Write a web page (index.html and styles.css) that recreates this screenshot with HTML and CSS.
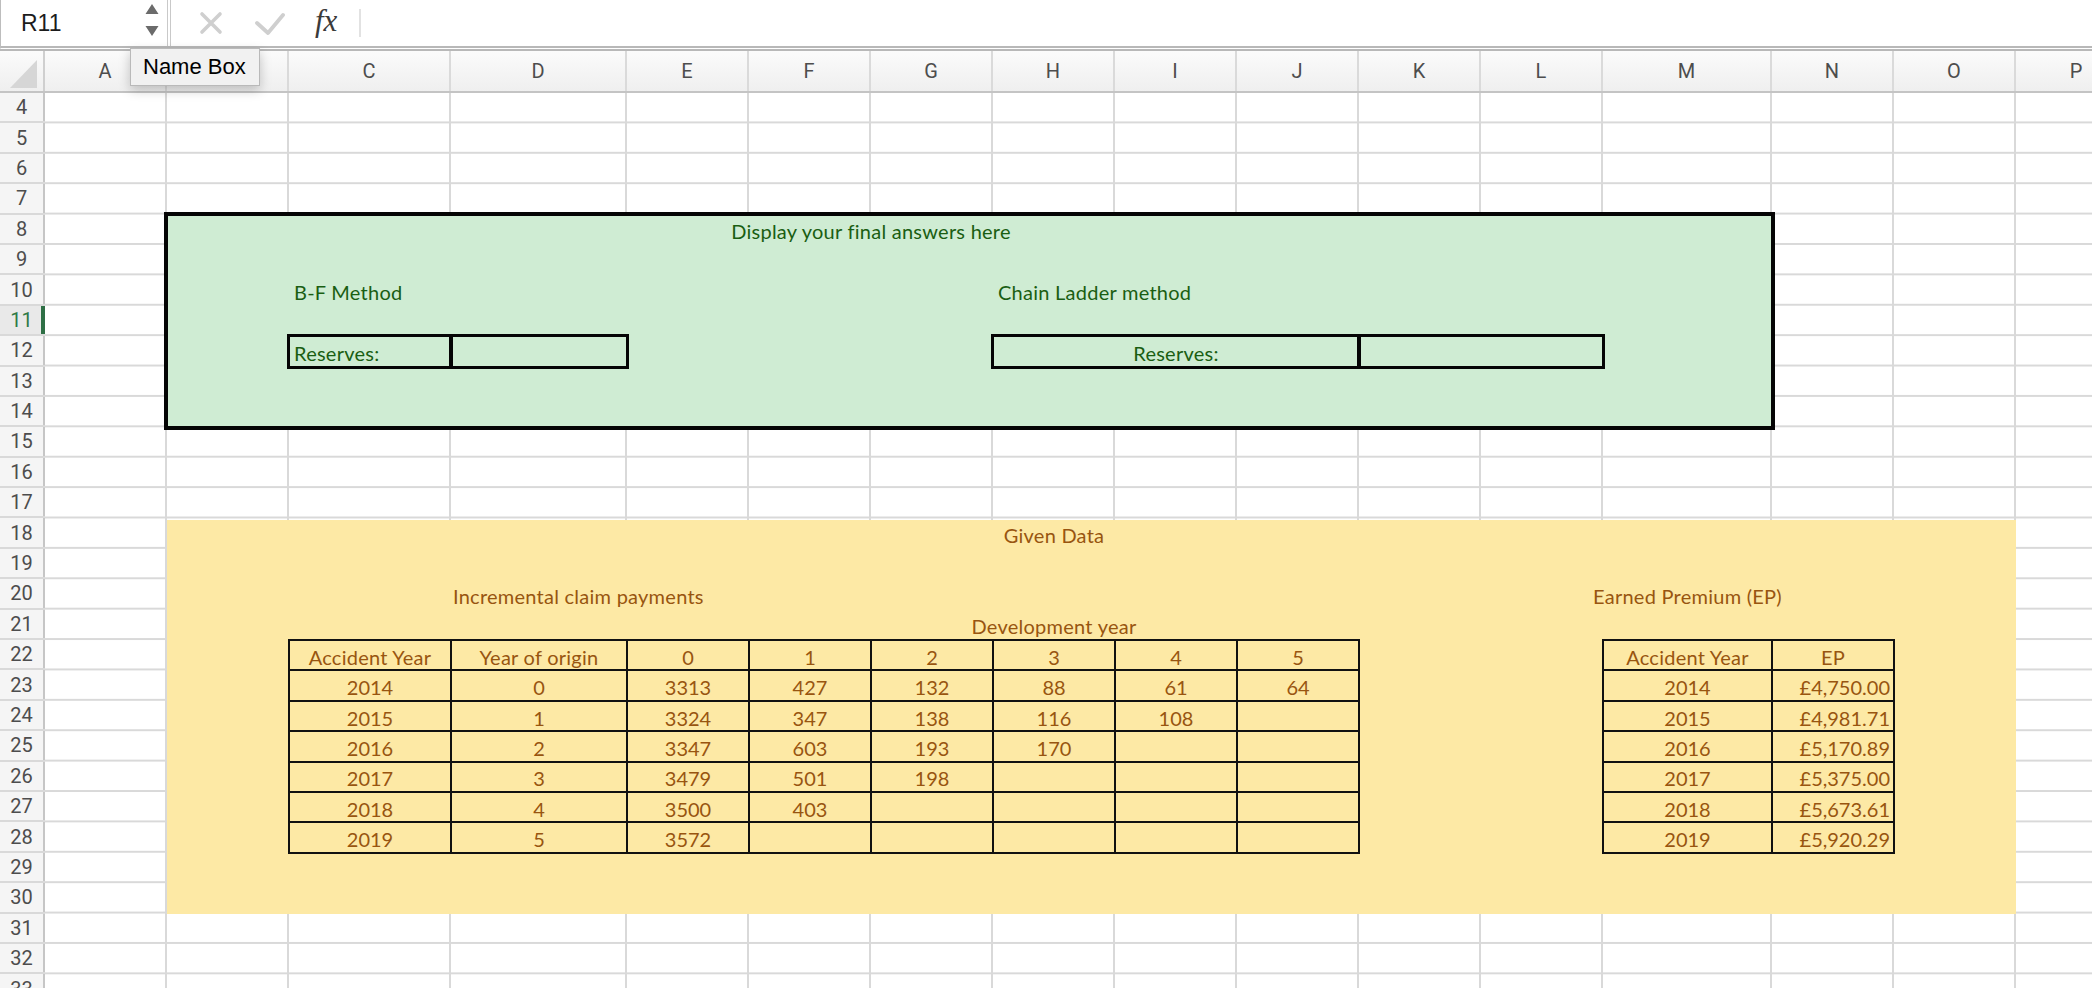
FILE: index.html
```html
<!DOCTYPE html>
<html lang="en">
<head>
<meta charset="utf-8">
<title>Claims reserving sheet</title>
<link rel="stylesheet" href="styles.css">
</head>
<body>
<div class="topbar">
  <div class="namebox">
    <span class="ref">R11</span>
    <svg class="spin" width="14" height="34" viewBox="0 0 14 34"><path d="M0.5 11 L7 1 L13.5 11 Z M0.5 23 L13.5 23 L7 33 Z" fill="#6b6b6b"/></svg>
  </div>
  <div class="fbar">
    <svg class="ico-x" width="24" height="24" viewBox="0 0 24 24"><path d="M3 3 L21 21 M21 3 L3 21" stroke="#cfcfcf" stroke-width="3.6" stroke-linecap="round" fill="none"/></svg>
    <svg class="ico-ok" width="30" height="24" viewBox="0 0 30 24"><path d="M2 11 L13 21 L28 3" stroke="#cfcfcf" stroke-width="3.8" stroke-linecap="round" stroke-linejoin="round" fill="none"/></svg>
    <span class="fx">fx</span>
    <span class="fdiv"></span>
    <div class="finput"></div>
  </div>
</div>

<div class="sheet">
  <div class="hdr">
    <div class="corner w0"><svg width="30" height="30" viewBox="0 0 30 30"><path d="M28 1 L28 29 L1 29 Z" fill="#d6d6d6"/></svg></div>
    <div class="ch wn">A</div>
    <div class="ch wn">B</div>
    <div class="ch wc">C</div>
    <div class="ch wd">D</div>
    <div class="ch wn">E</div>
    <div class="ch wn">F</div>
    <div class="ch wn">G</div>
    <div class="ch wn">H</div>
    <div class="ch wn">I</div>
    <div class="ch wn">J</div>
    <div class="ch wn">K</div>
    <div class="ch wn">L</div>
    <div class="ch wm">M</div>
    <div class="ch wn">N</div>
    <div class="ch wn">O</div>
    <div class="ch wn">P</div>
  </div>

  <div class="bg">
    <div class="rhcol">
      <div class="rh">4</div><div class="rh">5</div><div class="rh">6</div><div class="rh">7</div>
      <div class="rh">8</div><div class="rh">9</div><div class="rh">10</div><div class="rh sel">11</div>
      <div class="rh">12</div><div class="rh">13</div><div class="rh">14</div><div class="rh">15</div>
      <div class="rh">16</div><div class="rh">17</div><div class="rh">18</div><div class="rh">19</div>
      <div class="rh">20</div><div class="rh">21</div><div class="rh">22</div><div class="rh">23</div>
      <div class="rh">24</div><div class="rh">25</div><div class="rh">26</div><div class="rh">27</div>
      <div class="rh">28</div><div class="rh">29</div><div class="rh">30</div><div class="rh">31</div>
      <div class="rh">32</div><div class="rh">33</div>
    </div>
    <div class="stripe wn"></div>
    <div class="stripe wn"></div>
    <div class="stripe wc"></div>
    <div class="stripe wd"></div>
    <div class="stripe wn"></div>
    <div class="stripe wn"></div>
    <div class="stripe wn"></div>
    <div class="stripe wn"></div>
    <div class="stripe wn"></div>
    <div class="stripe wn"></div>
    <div class="stripe wn"></div>
    <div class="stripe wn"></div>
    <div class="stripe wm"></div>
    <div class="stripe wn"></div>
    <div class="stripe wn"></div>
    <div class="stripe wn"></div>
  </div>

  <div class="green">
    <div class="txt ctr g-title">Display your final answers here</div>
    <div class="txt lft g-bf">B-F Method</div>
    <div class="txt lft g-cl">Chain Ladder method</div>
    <div class="res res-bf">
      <div class="rcell txt lft">Reserves:</div>
      <div class="rcell"></div>
    </div>
    <div class="res res-cl">
      <div class="rcell txt ctr">Reserves:</div>
      <div class="rcell"></div>
    </div>
  </div>

  <div class="yellow">
    <div class="txt ctr y-given">Given Data</div>
    <div class="txt lft y-inc">Incremental claim payments</div>
    <div class="txt ctr y-ep">Earned Premium (EP)</div>
    <div class="txt ctr y-dev">Development year</div>

    <div class="claims">
      <div class="cell lbl">Accident Year</div><div class="cell lbl">Year of origin</div><div class="cell">0</div><div class="cell">1</div><div class="cell">2</div><div class="cell">3</div><div class="cell">4</div><div class="cell">5</div>
      <div class="cell">2014</div><div class="cell">0</div><div class="cell">3313</div><div class="cell">427</div><div class="cell">132</div><div class="cell">88</div><div class="cell">61</div><div class="cell">64</div>
      <div class="cell">2015</div><div class="cell">1</div><div class="cell">3324</div><div class="cell">347</div><div class="cell">138</div><div class="cell">116</div><div class="cell">108</div><div class="cell"></div>
      <div class="cell">2016</div><div class="cell">2</div><div class="cell">3347</div><div class="cell">603</div><div class="cell">193</div><div class="cell">170</div><div class="cell"></div><div class="cell"></div>
      <div class="cell">2017</div><div class="cell">3</div><div class="cell">3479</div><div class="cell">501</div><div class="cell">198</div><div class="cell"></div><div class="cell"></div><div class="cell"></div>
      <div class="cell">2018</div><div class="cell">4</div><div class="cell">3500</div><div class="cell">403</div><div class="cell"></div><div class="cell"></div><div class="cell"></div><div class="cell"></div>
      <div class="cell">2019</div><div class="cell">5</div><div class="cell">3572</div><div class="cell"></div><div class="cell"></div><div class="cell"></div><div class="cell"></div><div class="cell"></div>
    </div>

    <div class="eptbl">
      <div class="cell lbl">Accident Year</div><div class="cell lbl">EP</div>
      <div class="cell">2014</div><div class="cell num">£4,750.00</div>
      <div class="cell">2015</div><div class="cell num">£4,981.71</div>
      <div class="cell">2016</div><div class="cell num">£5,170.89</div>
      <div class="cell">2017</div><div class="cell num">£5,375.00</div>
      <div class="cell">2018</div><div class="cell num">£5,673.61</div>
      <div class="cell">2019</div><div class="cell num">£5,920.29</div>
    </div>
  </div>
</div>

<div class="tooltip">Name Box</div>
</body>
</html>
```

FILE: styles.css
```css
* { box-sizing: border-box; }
html, body { margin: 0; padding: 0; }
body {
  width: 2092px;
  height: 988px;
  overflow: hidden;
  position: relative;
  background: #ffffff;
  font-family: "Liberation Sans", Arial, sans-serif;
}

/* ---------- formula bar ---------- */
.topbar {
  height: 51px;
  display: flex;
  background: #ffffff;
  border-left: 1px solid #bdbdbd;
  border-bottom: 5px double #b8b8b8;
}
.namebox {
  flex: none;
  width: 170px;
  display: flex;
  align-items: center;
  justify-content: space-between;
  padding: 0 8px 0 20px;
  border-right: 4px double #c9c9c9;
}
.ref { font-size: 23px; color: #1c1c1c; }
.spin { margin-bottom: 6px; }
.fbar { flex: 1; display: flex; align-items: center; }
.ico-x { margin-left: 28px; flex: none; }
.ico-ok { margin-left: 32px; flex: none; margin-top: 2px; }
.fx {
  margin-left: 30px;
  font-family: "Liberation Serif", "Times New Roman", serif;
  font-style: italic;
  font-size: 31px;
  color: #3a3a3a;
  margin-top: -4px;
}
.fdiv { width: 2px; height: 28px; background: #e2e2e2; margin-left: 22px; }
.finput { flex: 1; }

/* ---------- sheet grid ---------- */
.sheet {
  display: grid;
  grid-template-columns: 45px 122px 122px 162px 176px repeat(8, 122px) 169px 122px 122px 122px;
  grid-template-rows: 42px repeat(30, 30.4px);
}
.w0 { width: 45px; }
.wn { width: 122px; }
.wc { width: 162px; }
.wd { width: 176px; }
.wm { width: 169px; }

.hdr {
  grid-column: 1 / -1;
  grid-row: 1;
  display: flex;
  background: linear-gradient(#fbfbfb, #efefef);
  border-bottom: 2px solid #c4c4c4;
}
.corner {
  flex: none;
  display: flex;
  align-items: flex-end;
  justify-content: flex-end;
  padding: 0 4px 2px 0;
  border-right: 2px solid #cfcfcf;
}
.ch {
  flex: none;
  display: flex;
  align-items: center;
  justify-content: center;
  font-family: Roboto, "Liberation Sans", sans-serif;
  font-size: 20px;
  color: #4d4d4d;
  border-right: 2px solid #dadada;
}

.bg {
  grid-column: 1 / -1;
  grid-row: 2 / -1;
  display: flex;
}
.rhcol {
  flex: none;
  width: 45px;
  display: flex;
  flex-direction: column;
  background: #f5f5f5;
}
.rh {
  flex: none;
  height: 30.4px;
  display: flex;
  align-items: center;
  justify-content: center;
  padding-right: 2px;
  font-family: Roboto, "Liberation Sans", sans-serif;
  font-size: 20px;
  color: #4d4d4d;
  border-bottom: 2px solid #d9d9d9;
  box-shadow: inset -2px 0 #c6c6c6;
}
.rh.sel {
  background: #e9e9e9;
  color: #2f7a47;
  box-shadow: inset -4px 0 #2e6f45;
}
.stripe {
  flex: none;
  height: 100%;
  border-right: 2px solid #d9d9d9;
  background-image: linear-gradient(to bottom, transparent calc(100% - 2px), #d9d9d9 calc(100% - 2px));
  background-size: 100% 30.4px;
}

/* ---------- cell text ---------- */
.txt {
  display: flex;
  align-items: center;
  white-space: nowrap;
  font-family: Lato, "Open Sans", sans-serif;
  font-size: 20px;
  letter-spacing: 0.25px;
  padding-top: 3px;
}
.ctr { justify-content: center; }
.lft { justify-content: flex-start; padding-left: 5px; }

/* ---------- green answers block ---------- */
.green {
  grid-column: 3 / 15;
  grid-row: 6 / 13;
  background: #cfecd3;
  outline: 4px solid #050505;
  outline-offset: -1px;
  color: #1a5e12;
  display: grid;
  grid-template-columns: 122px 162px 176px repeat(8, 122px) 169px;
  grid-template-rows: repeat(7, 30.4px);
}
.g-title { grid-column: 4 / 8; grid-row: 1; }
.g-bf { grid-column: 2; grid-row: 3; }
.g-cl { grid-column: 7; grid-row: 3; }
.res { display: grid; grid-row: 5; }
.res-bf { grid-column: 2 / 4; grid-template-columns: 162px 176px; }
.res-cl { grid-column: 7 / 12; grid-template-columns: 366px 244px; }
.rcell { outline: 3px solid #050505; outline-offset: -1.5px; }

/* ---------- yellow data block ---------- */
.yellow {
  grid-column: 3 / 17;
  grid-row: 16 / 29;
  margin-top: 2px;
  background: #fde9a5;
  color: #985510;
  display: grid;
  grid-template-columns: 122px 162px 176px repeat(8, 122px) 169px 122px 122px;
  grid-template-rows: repeat(13, 30.4px);
  align-content: end;
}
.y-given { grid-column: 7; grid-row: 1; }
.y-inc { grid-column: 3; grid-row: 3; padding-left: 2px; }
.y-ep { grid-column: 12; grid-row: 3; }
.y-dev { grid-column: 7; grid-row: 4; }

.claims {
  grid-column: 2 / 10;
  grid-row: 5 / 12;
  display: grid;
  grid-template-columns: 162px 176px repeat(6, 122px);
  grid-template-rows: repeat(7, 30.4px);
}
.eptbl {
  grid-column: 12 / 14;
  grid-row: 5 / 12;
  display: grid;
  grid-template-columns: 169px 122px;
  grid-template-rows: repeat(7, 30.4px);
}
.cell {
  outline: 2px solid #111111;
  outline-offset: -1px;
  display: flex;
  align-items: center;
  justify-content: center;
  padding-top: 3px;
  white-space: nowrap;
  font-family: Lato, "Open Sans", sans-serif;
  font-size: 20px;
}
.cell.lbl { letter-spacing: 0.25px; }
.cell.num { justify-content: flex-end; padding-right: 4px; }

/* ---------- tooltip ---------- */
.tooltip {
  position: absolute;
  left: 130px;
  top: 48px;
  width: 130px;
  height: 38px;
  display: flex;
  align-items: center;
  padding-left: 12px;
  font-size: 22px;
  color: #000000;
  background: #f1f1f1;
  border: 1px solid #b9b9b9;
  box-shadow: 0 4px 12px rgba(0, 0, 0, 0.22);
}
```
